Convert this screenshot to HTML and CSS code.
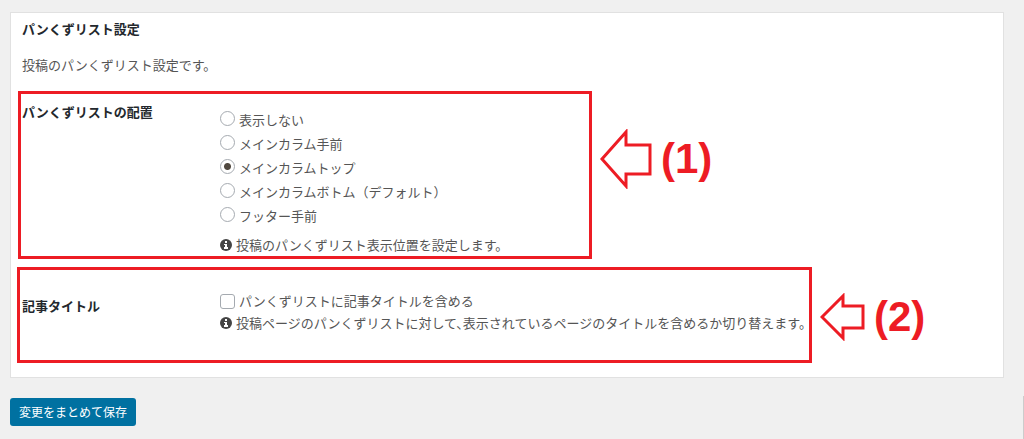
FILE: index.html
```
<!DOCTYPE html>
<html lang="ja">
<head>
<meta charset="utf-8">
<title>パンくずリスト設定</title>
<link rel="stylesheet" href="styles.css">
</head>
<body>
<form class="settings">
  <section class="card">
    <h2 class="card-title">パンくずリスト設定</h2>
    <p class="card-lead">投稿のパンくずリスト設定です。</p>

    <div class="step">
      <div class="frame frame-position" role="radiogroup" aria-labelledby="position-title">
        <h3 class="field-title" id="position-title">パンくずリストの配置</h3>
        <div class="field-body">
          <label class="option"><input class="radio" type="radio" name="position"><span class="option-text">表示しない</span></label>
          <label class="option"><input class="radio" type="radio" name="position"><span class="option-text">メインカラム手前</span></label>
          <label class="option"><input class="radio" type="radio" name="position" checked><span class="option-text">メインカラムトップ</span></label>
          <label class="option"><input class="radio" type="radio" name="position"><span class="option-text">メインカラムボトム（デフォルト）</span></label>
          <label class="option"><input class="radio" type="radio" name="position"><span class="option-text">フッター手前</span></label>
          <p class="note note-spaced">
            <svg class="info" viewBox="0 0 12 12" aria-hidden="true"><circle class="info-disc" cx="6" cy="6" r="6"/><path class="info-mark" d="M5 2h2v2H5zM4 5h3v3h1v2H4V8h1V6H4z"/></svg>
            <span>投稿のパンくずリスト表示位置を設定します。</span>
          </p>
        </div>
      </div>
      <svg class="arrow arrow-large" viewBox="0 0 52 60" aria-hidden="true"><path class="arrow-line" d="M2 30 26 3V16H50V45H26V57Z"/></svg>
      <span class="step-number">(1)</span>
    </div>

    <div class="step step-title">
      <div class="frame frame-title" role="group" aria-labelledby="article-title">
        <h3 class="field-title" id="article-title">記事タイトル</h3>
        <div class="field-body">
          <label class="option"><input class="checkbox" type="checkbox"><span>パンくずリストに記事タイトルを含める</span></label>
          <p class="note note-long">
            <svg class="info" viewBox="0 0 12 12" aria-hidden="true"><circle class="info-disc" cx="6" cy="6" r="6"/><path class="info-mark" d="M5 2h2v2H5zM4 5h3v3h1v2H4V8h1V6H4z"/></svg>
            <span>投稿ページのパンくずリストに対して、表示されているページのタイトルを含めるか切り替えます。</span>
          </p>
        </div>
      </div>
      <svg class="arrow arrow-small" viewBox="0 0 45 48" aria-hidden="true"><path class="arrow-line" d="M2 24 23 3V13H43V35H23V45Z"/></svg>
      <span class="step-number">(2)</span>
    </div>
  </section>
  <button class="save" type="submit">変更をまとめて保存</button>
</form>
<div class="edge" aria-hidden="true"></div>
</body>
</html>
```
FILE: styles.css
```
* {
  box-sizing: border-box;
}

body {
  margin: 0;
  background: #f0f0f0;
  color: #555;
  font: 13px/20px "Noto Sans CJK JP", sans-serif;
}

.settings {
  padding: 12px 20px 12px 10px;
}

.card {
  padding: 6px 6px 14px;
  border: 1px solid #e1e1e1;
  background: #fff;
}

.card-title,
.card-lead {
  margin: 0 0 16px;
  padding-left: 5px;
}

.card-title,
.field-title {
  color: #23282d;
  font-size: 13px;
  font-weight: 700;
}

.step {
  display: flex;
  align-items: center;
  margin-left: 1px;
}

.step-title {
  margin: 8px 0 0;
}

.frame {
  display: flex;
  border: 3px solid #ed1c24;
  white-space: nowrap;
}

.frame-position {
  flex: 0 1 574px;
  padding: 8px 0 1px 1px;
}

.frame-title {
  flex: 0 1 795px;
  padding: 19px 0 27px 2px;
}

.field-title {
  flex: 0 0 198px;
  margin: 0;
}

.frame-title .field-title {
  padding-top: 7px;
}

.field-body {
  padding-top: 4px;
}

.frame-title .field-body {
  padding-top: 0;
}

.option {
  display: flex;
  align-items: center;
  gap: 4px;
  height: 24px;
}

.option-text {
  padding-top: 3px;
}

.radio,
.checkbox {
  flex: none;
  width: 15px;
  height: 15px;
  margin: 0;
  border: 1px solid #a5aab0;
  background: #fff;
  appearance: none;
}

.radio {
  border-radius: 50%;
}

.radio:checked {
  background: radial-gradient(circle, #50483f 3px, #fff 4px);
}

.checkbox {
  border-radius: 3px;
}

.note {
  display: flex;
  align-items: center;
  gap: 4px;
  margin: 0;
}

.note-spaced {
  margin-top: 9px;
}

.note-long {
  font-feature-settings: "halt";
}

.info {
  flex: none;
  width: 12px;
  height: 12px;
}

.info-disc {
  fill: #444;
}

.info-mark {
  fill: #fff;
}

.arrow {
  flex: none;
  margin-left: 8px;
}

.arrow-large {
  width: 52px;
  height: 60px;
  margin-top: -32px;
}

.arrow-small {
  width: 45px;
  height: 48px;
  margin-top: 4px;
}

.arrow-line {
  fill: #fff;
  stroke: #ed1c24;
  stroke-width: 3;
}

.step-number {
  margin: 4px 0 0 9px;
  color: #ed1c24;
  font: 700 42px/40px "Liberation Sans", Arial, sans-serif;
}

.arrow-large + .step-number {
  margin-top: -32px;
}

.save {
  display: block;
  height: 28px;
  margin-top: 20px;
  padding: 0 9px;
  border: 0;
  border-radius: 3px;
  background: #0071a1;
  color: #fff;
  font: 12px/28px "Noto Sans CJK JP", sans-serif;
}

.edge {
  position: absolute;
  right: 0;
  bottom: 0;
  width: 1px;
  height: 43px;
  background: #ccc;
}
```
